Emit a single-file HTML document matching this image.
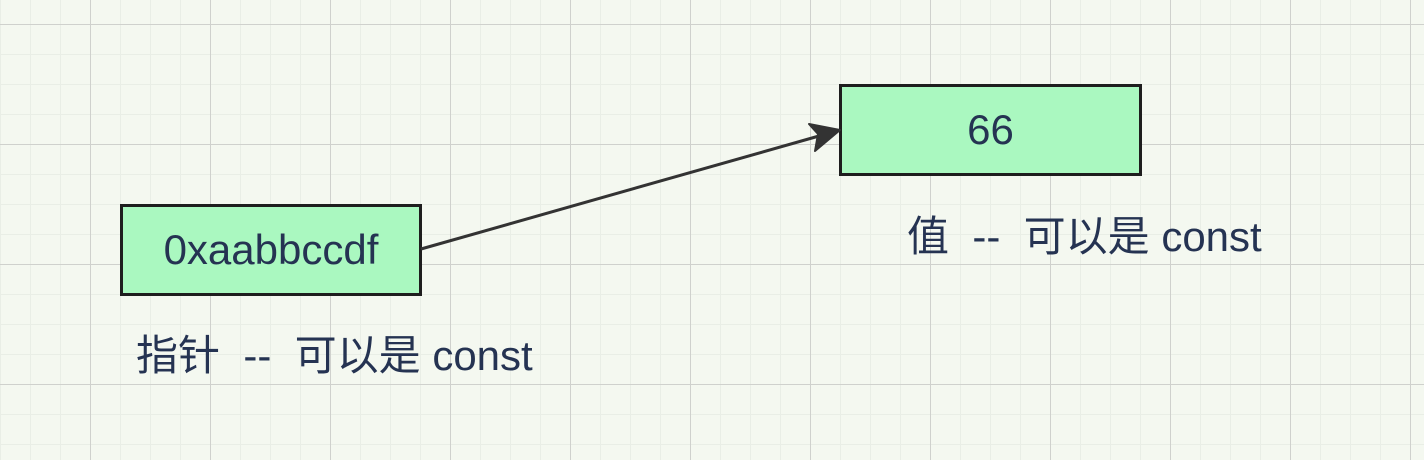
<!DOCTYPE html>
<html><head><meta charset="utf-8"><style>
body{margin:0;width:1424px;height:460px;overflow:hidden;background:#f4f8f0;
background-image:
linear-gradient(#cfd1cd 1px,transparent 1px),
linear-gradient(90deg,#cfd1cd 1px,transparent 1px),
linear-gradient(#e9eee6 1px,transparent 1px),
linear-gradient(90deg,#e9eee6 1px,transparent 1px);
background-size:120px 120px,120px 120px,30px 30px,30px 30px;
background-position:0 24px,90px 0,0 24px,0 0;
font-family:"Liberation Sans","Noto Sans CJK SC",sans-serif;color:#253352;position:relative}
.b{position:absolute;background:#aaf8c0;border:3px solid #1e1e1e;box-sizing:border-box;display:flex;align-items:center;justify-content:center;font-size:42px}
.t{position:absolute;font-size:42px;white-space:pre;line-height:48px}
</style></head><body>
<div class="b" style="left:120px;top:204px;width:302px;height:92px">0xaabbccdf</div>
<div class="b" style="left:839px;top:84px;width:303px;height:92px">66</div>
<div class="t" style="left:136px;top:332px">指针  --  可以是 const</div>
<div class="t" style="left:907px;top:213px">值  --  可以是 const</div>
<svg width="1424" height="460" style="position:absolute;left:0;top:0">
<line x1="421" y1="249" x2="826" y2="134" stroke="#333" stroke-width="3"/>
<polygon points="840,130 809,124 818,134 815,151" fill="#333" stroke="#333" stroke-width="2" stroke-linejoin="round"/>
</svg>
</body></html>
